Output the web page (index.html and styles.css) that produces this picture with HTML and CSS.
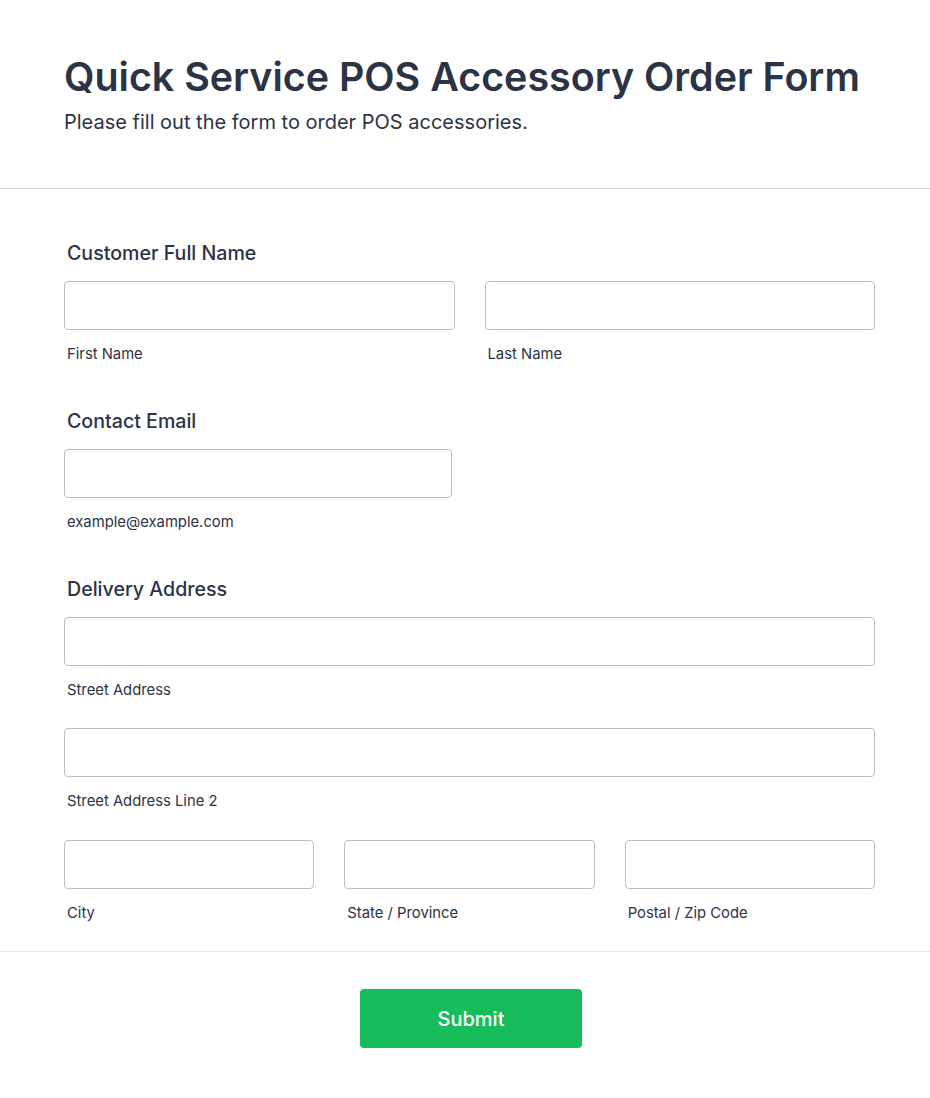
FILE: index.html
```html
<!DOCTYPE html>
<html lang="en">
<head>
<meta charset="utf-8">
<title>Quick Service POS Accessory Order Form</title>
<link rel="stylesheet" href="styles.css">
</head>
<body>
<form class="form">
  <header class="form-header">
    <h1 class="form-title">Quick Service POS Accessory Order Form</h1>
    <p class="form-subtitle">Please fill out the form to order POS accessories.</p>
  </header>

  <div class="form-body">
    <section class="field">
      <label class="field-label">Customer Full Name</label>
      <div class="row row-2">
        <div class="sub">
          <input class="input" type="text">
          <span class="sublabel">First Name</span>
        </div>
        <div class="sub">
          <input class="input" type="text">
          <span class="sublabel">Last Name</span>
        </div>
      </div>
    </section>

    <section class="field">
      <label class="field-label">Contact Email</label>
      <div class="row row-email">
        <div class="sub">
          <input class="input" type="email">
          <span class="sublabel">example@example.com</span>
        </div>
      </div>
    </section>

    <section class="field field-address">
      <label class="field-label">Delivery Address</label>
      <div class="address">
        <div class="sub">
          <input class="input" type="text">
          <span class="sublabel">Street Address</span>
        </div>
        <div class="sub">
          <input class="input" type="text">
          <span class="sublabel">Street Address Line 2</span>
        </div>
        <div class="row row-3">
          <div class="sub">
            <input class="input" type="text">
            <span class="sublabel">City</span>
          </div>
          <div class="sub">
            <input class="input" type="text">
            <span class="sublabel">State / Province</span>
          </div>
          <div class="sub">
            <input class="input" type="text">
            <span class="sublabel">Postal / Zip Code</span>
          </div>
        </div>
      </div>
    </section>
  </div>

  <footer class="form-footer">
    <button class="submit" type="button">Submit</button>
  </footer>
</form>
</body>
</html>
```

FILE: styles.css
```css
* { box-sizing: border-box; }

html, body {
  margin: 0;
  padding: 0;
  background: #ffffff;
}

body {
  font-family: Inter, "Noto Sans", "Liberation Sans", sans-serif;
  color: #2c3345;
}

.form {
  width: 930px;
}

.form-header {
  padding: 53px 55px 0 64px;
  height: 189px;
  border-bottom: 1px solid #d3d8e3;
}

.form-title {
  margin: 0;
  font-size: 39.4px;
  line-height: 48px;
  font-weight: 600;
  letter-spacing: 0;
}

.form-subtitle {
  margin: 9px 0 0;
  font-size: 20px;
  line-height: 24px;
  font-weight: 400;
}

.form-body {
  padding: 50px 55px 0 64px;
}

.field {
  display: flex;
  flex-direction: column;
  margin-bottom: 44px;
}

.field-address {
  margin-bottom: 29px;
}

.field-label {
  display: block;
  padding: 2px 0 0 3px;
  font-size: 19.6px;
  line-height: 24px;
  font-weight: 500;
  margin-bottom: 16px;
}

.row {
  display: grid;
  column-gap: 30px;
}

.row-2 { grid-template-columns: 1fr 1fr; }
.row-3 { grid-template-columns: 1fr 1fr 1fr; margin-top: 1px; }
.row-email { grid-template-columns: 388px; }

.address {
  display: flex;
  flex-direction: column;
  gap: 29px;
}

.sub {
  display: flex;
  flex-direction: column;
}

.input {
  display: block;
  width: 100%;
  height: 49px;
  border: 1px solid #b8bdc9;
  border-radius: 4px;
  background: #fff;
  font: inherit;
}

.sublabel {
  display: block;
  padding-left: 3px;
  margin-top: 15px;
  font-size: 14.8px;
  line-height: 18px;
  color: #2c3345;
}

.form-footer {
  border-top: 1px solid #e6e9f0;
  padding: 37px 0 50px;
  display: flex;
  justify-content: center;
  padding-left: 12px;
}

.submit {
  width: 222px;
  height: 59px;
  border: none;
  border-radius: 4px;
  background: #18bd5b;
  color: #fff;
  font-family: inherit;
  font-size: 20px;
  font-weight: 500;
}
```
